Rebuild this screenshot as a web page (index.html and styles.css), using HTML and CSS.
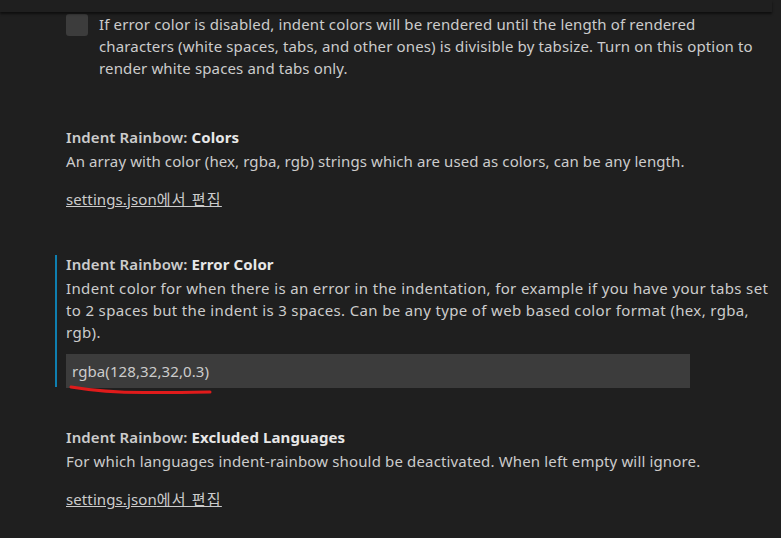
FILE: index.html
```html
<!DOCTYPE html>
<html lang="ko">
<head>
<meta charset="utf-8">
<link rel="stylesheet" href="styles.css">
</head>
<body>
<div class="header"></div>
<div class="list">
  <div class="item item-first">
    <div class="check-row">
      <span class="checkbox"></span>
      <div class="check-text">If error color is disabled, indent colors will be rendered until the length of rendered characters (white spaces, tabs, and other ones) is divisible by tabsize. Turn on this option to render white spaces and tabs only.</div>
    </div>
  </div>

  <div class="item item-colors">
    <div class="title"><span class="cat">Indent Rainbow: </span><span class="name">Colors</span></div>
    <div class="desc">An array with color (hex, rgba, rgb) strings which are used as colors, can be any length.</div>
    <a class="link">settings.json<span class="ko">에서 편집</span></a>
  </div>

  <div class="item item-focused">
    <div class="title"><span class="cat">Indent Rainbow: </span><span class="name">Error Color</span></div>
    <div class="desc">Indent color for when there is an error in the indentation, for example if you have your tabs set to 2 spaces but the indent is 3 spaces. Can be any type of web based color format (hex, rgba, rgb).</div>
    <div class="input">rgba(128,32,32,0.3)</div>
    <svg class="scribble" width="150" height="14" viewBox="0 0 150 14"><path d="M2 3 C 20 6, 40 8.5, 75 8.5 S 130 8, 141 8" fill="none" stroke="#e01b1b" stroke-width="3" stroke-linecap="round"/></svg>
  </div>

  <div class="item item-excluded">
    <div class="title"><span class="cat">Indent Rainbow: </span><span class="name">Excluded Languages</span></div>
    <div class="desc">For which languages indent-rainbow should be deactivated. When left empty will ignore.</div>
    <a class="link">settings.json<span class="ko">에서 편집</span></a>
  </div>
</div>
</body>
</html>
```

FILE: styles.css
```css
html, body {
  margin: 0;
  padding: 0;
  background: #1f1f1f;
  overflow: hidden;
}
body {
  font-family: "Noto Sans", "Noto Sans CJK KR", sans-serif;
  font-size: 15px;
  letter-spacing: 0.1px;
  line-height: 22px;
  color: #cccccc;
  width: 781px;
  height: 538px;
}
.header {
  height: 12px;
  width: 772px;
  box-shadow: 0 2px 2px rgba(0, 0, 0, 0.55);
  position: relative;
  z-index: 1;
  background: #1f1f1f;
}
.list {
  padding-left: 55px;
  width: 717px;
}
.item {
  border-left: 2px solid transparent;
  padding-left: 9px;
  position: relative;
}
.item-first {
  padding-top: 1px;
}
.check-row {
  display: flex;
  gap: 11px;
}
.checkbox {
  flex: none;
  width: 22px;
  height: 22px;
  margin-top: 1px;
  border-radius: 3px;
  background: #3c3c3c;
}
.check-text {
  flex: none;
  width: 661px;
  letter-spacing: 0.14px;
}
.title {
  font-weight: 600;
  color: #cccccc;
  margin-bottom: 2px;
}
.title .name {
  font-weight: 700;
  color: #e7e7e7;
}
.desc {
  color: #cccccc;
}
.link {
  display: inline-block;
  margin-top: 16px;
  color: #cccccc;
  text-decoration: underline;
}
.link .ko {
  letter-spacing: 1.2px;
}
.item-colors {
  margin-top: 47px;
}
.item-focused {
  margin-top: 43px;
}
.item-focused .desc {
  letter-spacing: 0.35px;
}
.item-focused::before {
  content: "";
  position: absolute;
  left: -2px;
  top: 2px;
  bottom: 1px;
  width: 2px;
  background: #0f7fb0;
}
.item-excluded {
  margin-top: 38px;
}
.item-excluded .desc {
  letter-spacing: 0.15px;
}
.input {
  margin-top: 11px;
  width: 624px;
  height: 34px;
  box-sizing: border-box;
  padding: 4px 6px;
  line-height: 26px;
  background: #3c3c3c;
  color: #cccccc;
}
.scribble {
  position: absolute;
  left: 12px;
  top: calc(100% - 4px);
}
```
